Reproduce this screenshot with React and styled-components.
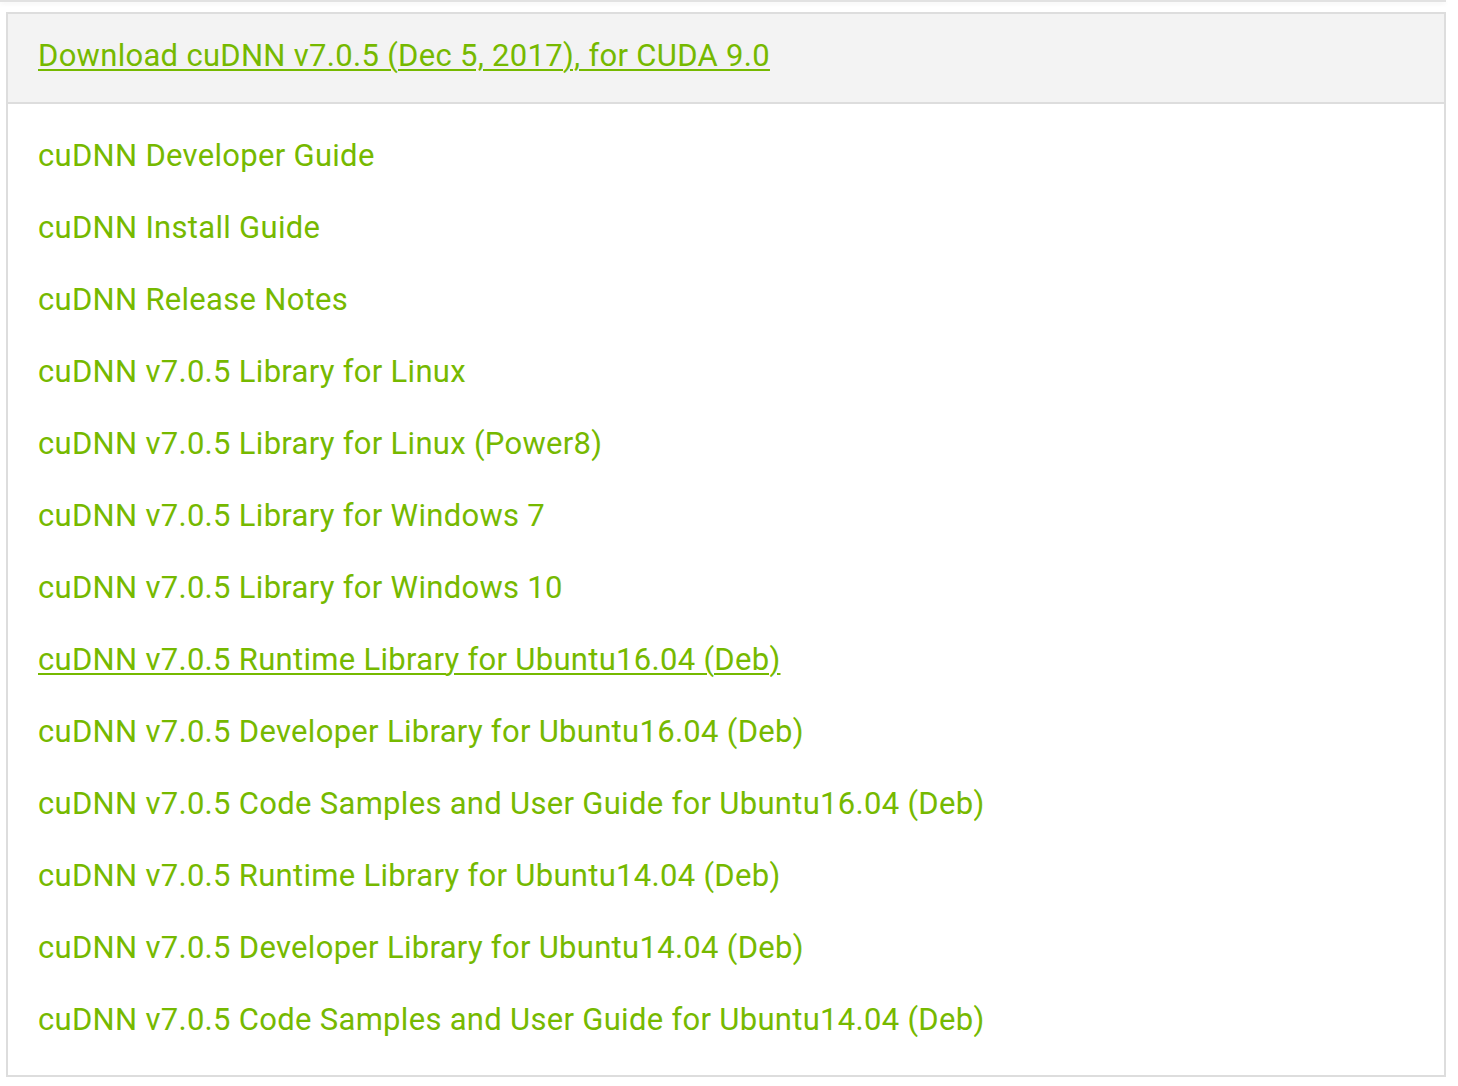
import React from "react";
import styled, { createGlobalStyle } from "styled-components";

const links = [
  "cuDNN Developer Guide",
  "cuDNN Install Guide",
  "cuDNN Release Notes",
  "cuDNN v7.0.5 Library for Linux",
  "cuDNN v7.0.5 Library for Linux (Power8)",
  "cuDNN v7.0.5 Library for Windows 7",
  "cuDNN v7.0.5 Library for Windows 10",
  "cuDNN v7.0.5 Runtime Library for Ubuntu16.04 (Deb)",
  "cuDNN v7.0.5 Developer Library for Ubuntu16.04 (Deb)",
  "cuDNN v7.0.5 Code Samples and User Guide for Ubuntu16.04 (Deb)",
  "cuDNN v7.0.5 Runtime Library for Ubuntu14.04 (Deb)",
  "cuDNN v7.0.5 Developer Library for Ubuntu14.04 (Deb)",
  "cuDNN v7.0.5 Code Samples and User Guide for Ubuntu14.04 (Deb)",
];

function App() {
  return (
    <>
      <GlobalStyle />
      <Page>
        <PrevPanel />
        <Panel>
          <Header>
            <Link href="#" underline>
              Download cuDNN v7.0.5 (Dec 5, 2017), for CUDA 9.0
            </Link>
          </Header>
          <Body>
            {links.map((l, i) => (
              <Row key={l}>
                <Link href="#" underline={i === 7}>
                  {l}
                </Link>
              </Row>
            ))}
          </Body>
        </Panel>
      </Page>
    </>
  );
}

export default App;

const GlobalStyle = createGlobalStyle`
  body {
    margin: 0;
    background: #fff;
    font-family: Roboto, "Noto Sans", sans-serif;
  }
`;

const Page = styled.div`
  width: 1458px;
  display: flex;
  flex-direction: column;
`;

const PrevPanel = styled.div`
  width: 1446px;
  height: 2px;
  background: #e2e2e2;
  box-shadow: 0 2px 4px rgba(0, 0, 0, 0.06);
`;

const Panel = styled.div`
  margin: 10px 0 0 6px;
  width: 1436px;
  border: 2px solid #dddddd;
  display: flex;
  flex-direction: column;
`;

const Header = styled.div`
  height: 90px;
  background: #f3f3f3;
  border-bottom: 2px solid #dddddd;
  display: flex;
  align-items: center;
  padding: 0 0 6px 30px;
  box-sizing: border-box;
`;

const Body = styled.div`
  padding: 15px 0 20px 30px;
  display: flex;
  flex-direction: column;
`;

const Row = styled.div`
  height: 72px;
  display: flex;
  align-items: center;
`;

const Link = styled.a`
  color: #76b900;
  font-size: 31px;
  letter-spacing: 0.3px;
  text-decoration: ${(p) => (p.underline ? "underline" : "none")};
  text-decoration-thickness: 2px;
  text-underline-offset: 3px;
`;
